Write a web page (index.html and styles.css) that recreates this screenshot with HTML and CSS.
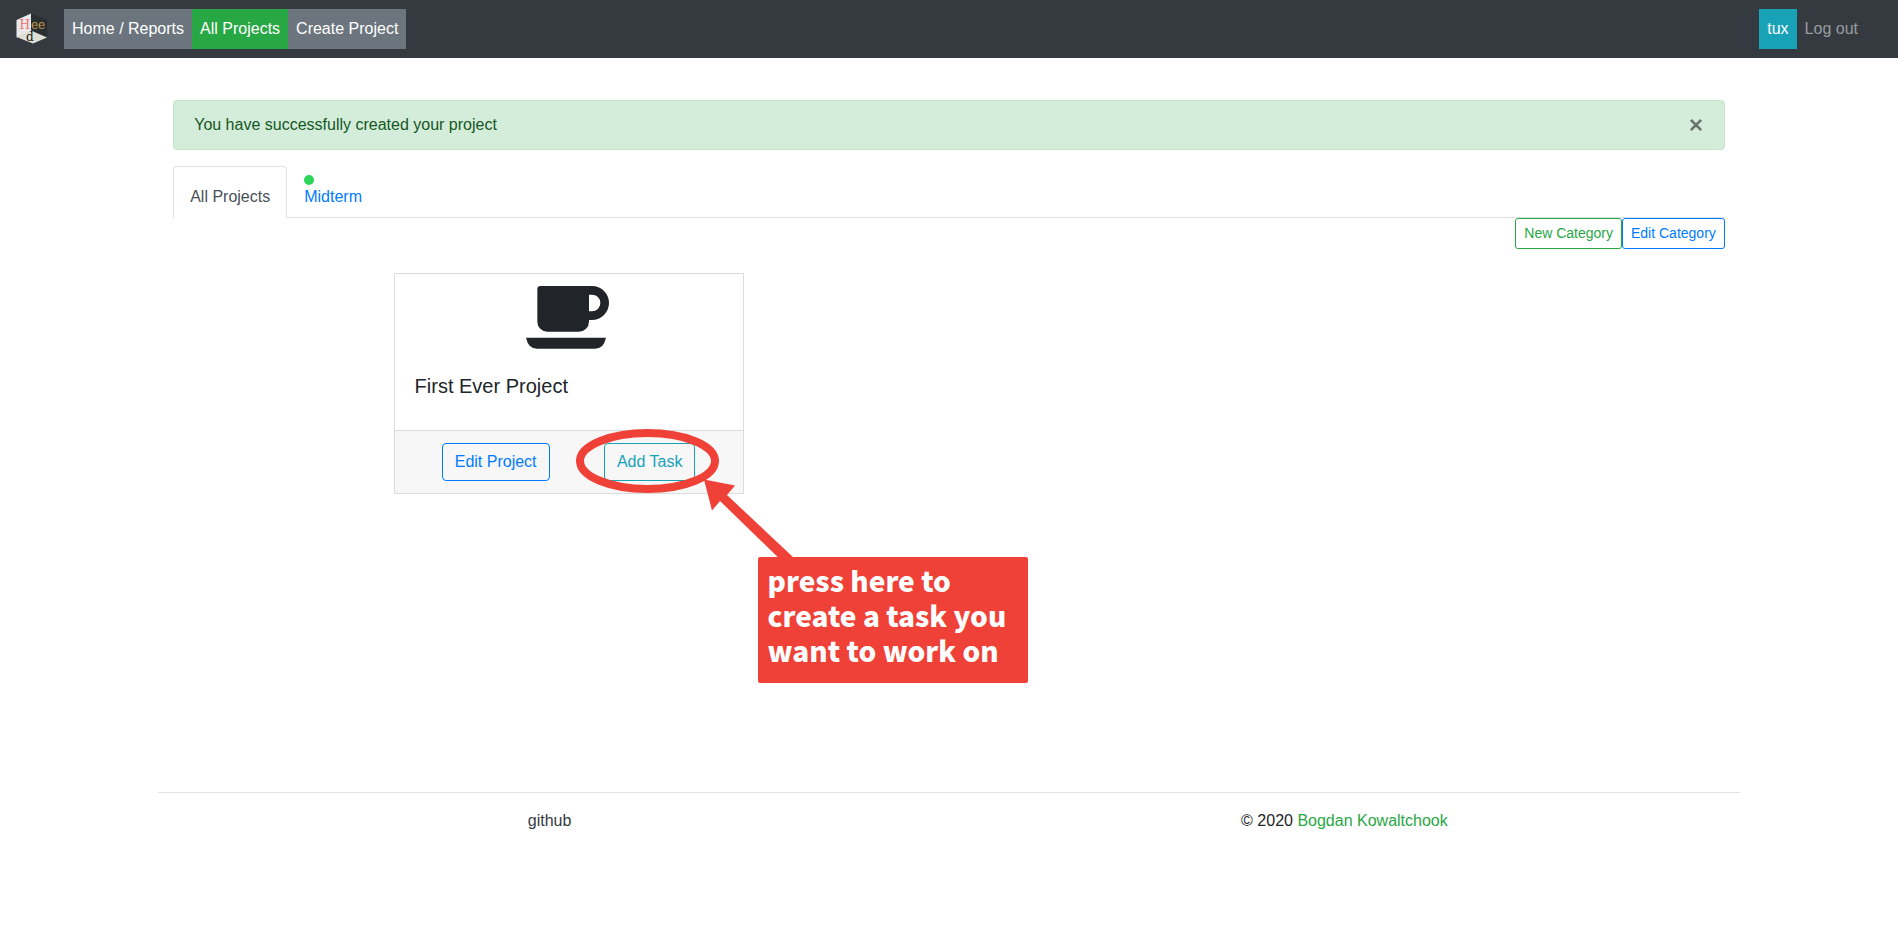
FILE: index.html
```
<!DOCTYPE html>
<html lang="en">
<head>
<meta charset="utf-8">
<meta name="viewport" content="width=device-width, initial-scale=1">
<title>All Projects</title>
<link rel="stylesheet" href="styles.css">
</head>
<body>
<nav class="navbar">
  <a class="brand" href="#" aria-label="Heed">
    <svg class="logo" viewBox="0 0 32 32" aria-hidden="true">
      <path d="M15 .5 31 7V24L15 18Z" fill="#292e31"/>
      <path d="M15 .5V18L.5 24.500V7Z" fill="#e9e9ec"/>
      <path d="M15 17.500 31 24.500 17 30.500 .5 24Z" fill="#dfdfd5"/>
      <text class="logo-text" x="3.500" y="15.500" fill="#f0706c">H</text>
      <text class="logo-text" x="15" y="15.500" fill="#c99b4c">ee</text>
      <text class="logo-text" x="10" y="28" fill="#111">d</text>
    </svg>
  </a>
  <div class="nav-links">
    <a class="nav-link nav-secondary" href="#">Home / Reports</a>
    <a class="nav-link nav-active" href="#">All Projects</a>
    <a class="nav-link nav-secondary" href="#">Create Project</a>
  </div>
  <div class="nav-links nav-user">
    <a class="nav-link nav-info" href="#">tux</a>
    <a class="nav-link nav-muted" href="#">Log out</a>
  </div>
</nav>

<main class="main">
  <div class="alert" role="alert">
    <span>You have successfully created your project</span>
    <button class="close" type="button" aria-label="Close">
      <svg class="close-icon" viewBox="0 0 14 14" aria-hidden="true"><path d="M2.500 2.500 11.500 11.500M11.500 2.500 2.500 11.500"/></svg>
    </button>
  </div>

  <div class="tabs">
    <a class="tab tab-active" href="#"><span class="dot"></span>All Projects</a>
    <a class="tab" href="#"><span class="dot dot-green"></span>Midterm</a>
  </div>
  <div class="category-actions">
    <button class="btn btn-sm btn-success" type="button">New Category</button>
    <button class="btn btn-sm btn-primary" type="button">Edit Category</button>
  </div>

  <section class="projects">
    <article class="card">
      <svg class="cup" viewBox="0 0 249 189" aria-hidden="true">
        <path fill-rule="evenodd" d="M44 0H198A51 51 0 0 1 198 102H189V107A30 30 0 0 1 159 137H64A30 30 0 0 1 34 107V10Q34 0 44 0ZM189 26V76H198A25 25 0 0 0 198 26Z"/>
        <path d="M0 155H240Q233 188 207 188H33Q7 188 0 155Z"/>
      </svg>
      <div class="card-body"><h5 class="card-title">First Ever Project</h5></div>
      <div class="card-footer">
        <button class="btn btn-primary" type="button">Edit Project</button>
        <button class="btn btn-info" type="button">Add Task</button>
      </div>
      <svg class="pointer" viewBox="0 0 240 150" aria-hidden="true">
        <ellipse cx="87.500" cy="36" rx="67.500" ry="28" fill="none" stroke="#ef4137" stroke-width="8"/>
        <path d="M144 54.500 175 60.500 167 70 234 133 226 140 160 76 152 85.500Z" fill="#ef4137"/>
      </svg>
      <p class="callout">press here to<br>create a task you<br>want to work on</p>
    </article>
  </section>
</main>

<footer class="footer">
  <div><a class="footer-github" href="#">github</a></div>
  <div>© 2020 <a class="footer-author" href="#">Bogdan Kowaltchook</a></div>
</footer>
</body>
</html>
```
FILE: styles.css
```
*, *::before, *::after { box-sizing: border-box; }

body {
  margin: 0;
  background: #fff;
  color: #212529;
  font: 16px/24px "Liberation Sans", Arial, sans-serif;
}

a { text-decoration: none; }

/* Top bar */
.navbar {
  display: flex;
  align-items: center;
  min-height: 58px;
  padding: 8px 32px 8px 16px;
  background: #343a40;
}
.brand { display: flex; margin-right: 16px; }
.logo { width: 32px; height: 32px; }
.logo-text { font: 12px "DejaVu Serif", serif; }
.nav-links { display: flex; }
.nav-user { margin-left: auto; }
.nav-link { padding: 8px; color: #fff; }
.nav-secondary { background: #6c757d; }
.nav-active { background: #28a745; }
.nav-info { background: #17a2b8; }
.nav-muted { color: #999c9f; }

/* Content column: ten twelfths of the window */
.main {
  width: 83.333%;
  min-height: calc(100vh - 196px);
  margin: 0 auto;
  padding: 42px 15px 0;
}

.alert {
  display: flex;
  justify-content: space-between;
  align-items: center;
  margin-bottom: 16px;
  padding: 12px 20px;
  border: 1px solid #c3e6cb;
  border-radius: 4px;
  background: #d4edda;
  color: #155724;
}
.close {
  display: flex;
  padding: 0;
  border: 0;
  background: none;
  opacity: .5;
}
.close-icon {
  width: 16px;
  height: 16px;
  fill: none;
  stroke: #000;
  stroke-width: 2.4;
}

.tabs { display: flex; border-bottom: 1px solid #dee2e6; }
.tab {
  margin-bottom: -1px;
  padding: 8px 16px;
  border: 1px solid transparent;
  border-radius: 4px 4px 0 0;
  color: #007bff;
}
.tab-active {
  border-color: #dee2e6 #dee2e6 #fff;
  background: #fff;
  color: #495057;
}
.dot { display: block; width: 10px; height: 10px; border-radius: 50%; }
.dot-green { background: #2dd55b; }

.category-actions { display: flex; justify-content: flex-end; }

.btn {
  padding: 6px 12px;
  border: 1px solid currentColor;
  border-radius: 4px;
  background: transparent;
  font: inherit;
}
.btn-sm { padding: 4px 8px; border-radius: 3px; font-size: 14px; line-height: 21px; }
.btn-primary { color: #007bff; }
.btn-success { color: #28a745; }
.btn-info { color: #17a2b8; }

/* Project cards */
.projects {
  display: grid;
  grid-template-columns: 1fr 1fr;
  justify-items: center;
  margin: 24px -30px 0 0;
}
.card {
  position: relative;
  width: 350px;
  border: 1px solid #dcdcdd;
}
.cup {
  display: block;
  width: 83px;
  height: 63px;
  margin: 12px auto 5px 131px;
  fill: #212529;
}
.card-body { padding: 20px; }
.card-title { margin: 0 0 12px; font-size: 20px; font-weight: 400; line-height: 24px; }
.card-footer {
  display: flex;
  justify-content: space-around;
  padding: 12px 20px;
  border-top: 1px solid #dcdcdd;
  background: #f7f7f7;
}

/* Hint drawn over the card */
.pointer {
  position: absolute;
  top: 151px;
  left: 165px;
  width: 240px;
  height: 150px;
}
.callout {
  position: absolute;
  top: 283px;
  left: 363px;
  width: 270px;
  margin: 0;
  padding: 6px 10px 15px;
  border-radius: 2px;
  background: #ef4137;
  color: #fff;
  font: 900 28px/35px "Noto Sans CJK SC", sans-serif;
  white-space: nowrap;
}

.footer {
  display: grid;
  grid-template-columns: 1fr 1fr;
  width: 83.333%;
  margin: 0 auto;
  padding: 16px 0;
  border-top: 1px solid #dee2e6;
  text-align: center;
}
.footer-github { margin-right: 8px; color: #343a40; }
.footer-author { color: #28a745; }
```
